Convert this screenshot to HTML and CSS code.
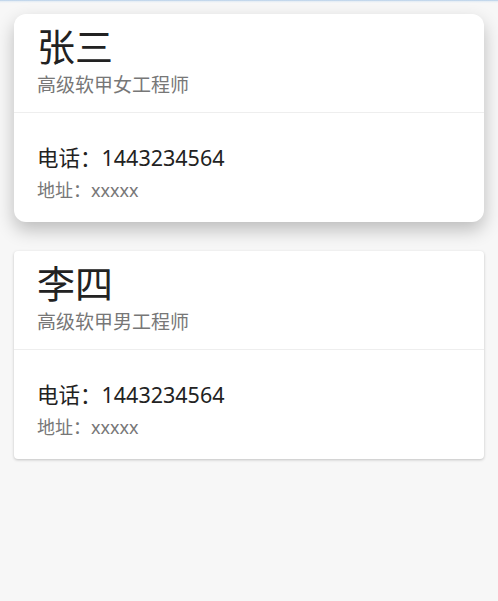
FILE: index.html
```html
<!DOCTYPE html>
<html lang="zh-CN">
<head>
  <meta charset="UTF-8" />
  <meta name="viewport" content="width=device-width, initial-scale=1.0"/>
  <title>名片</title>
  <link rel="stylesheet" href="styles.css">
</head>
<body>
  <div class="topbar"></div>
  <div class="list">
    <div class="card card-raised">
      <div class="card-head">
        <h1 class="name">张三</h1>
        <p class="job">高级软甲女工程师</p>
      </div>
      <div class="card-body">
        <p class="phone">电话：1443234564</p>
        <p class="addr">地址：xxxxx</p>
      </div>
    </div>
    <div class="card">
      <div class="card-head">
        <h1 class="name">李四</h1>
        <p class="job">高级软甲男工程师</p>
      </div>
      <div class="card-body">
        <p class="phone">电话：1443234564</p>
        <p class="addr">地址：xxxxx</p>
      </div>
    </div>
  </div>
</body>
</html>
```

FILE: styles.css
```css
* {
  margin: 0;
  padding: 0;
  box-sizing: border-box;
}

body {
  background-color: #f7f7f7;
  font-family: "Noto Sans", "Noto Sans CJK SC", sans-serif;
  color: #222;
}

.topbar {
  height: 3px;
  background: linear-gradient(#acc9e6, #e4ecf4 40%, #f7f7f7);
}

.list {
  display: flex;
  flex-direction: column;
  gap: 29px;
  padding: 11px 14px;
}

.card {
  background-color: #fff;
  border-radius: 4px;
  box-shadow: 0 1px 3px rgba(0, 0, 0, 0.22);
}

.card-raised {
  border-radius: 12px;
  box-shadow: 0 8px 18px rgba(0, 0, 0, 0.24);
}

.card-head {
  padding: 12px 23px 8px;
  border-bottom: 1px solid #eeeeee;
}

.name {
  font-size: 38px;
  font-weight: 400;
  line-height: 40px;
  color: #222;
}

.job {
  font-size: 19px;
  line-height: 38px;
  color: #777;
}

.card-body {
  padding: 30px 23px 15px;
}

.phone {
  font-size: 21.5px;
  line-height: 30px;
  color: #222;
}

.addr {
  font-size: 18px;
  line-height: 34px;
  color: #777;
}
```
